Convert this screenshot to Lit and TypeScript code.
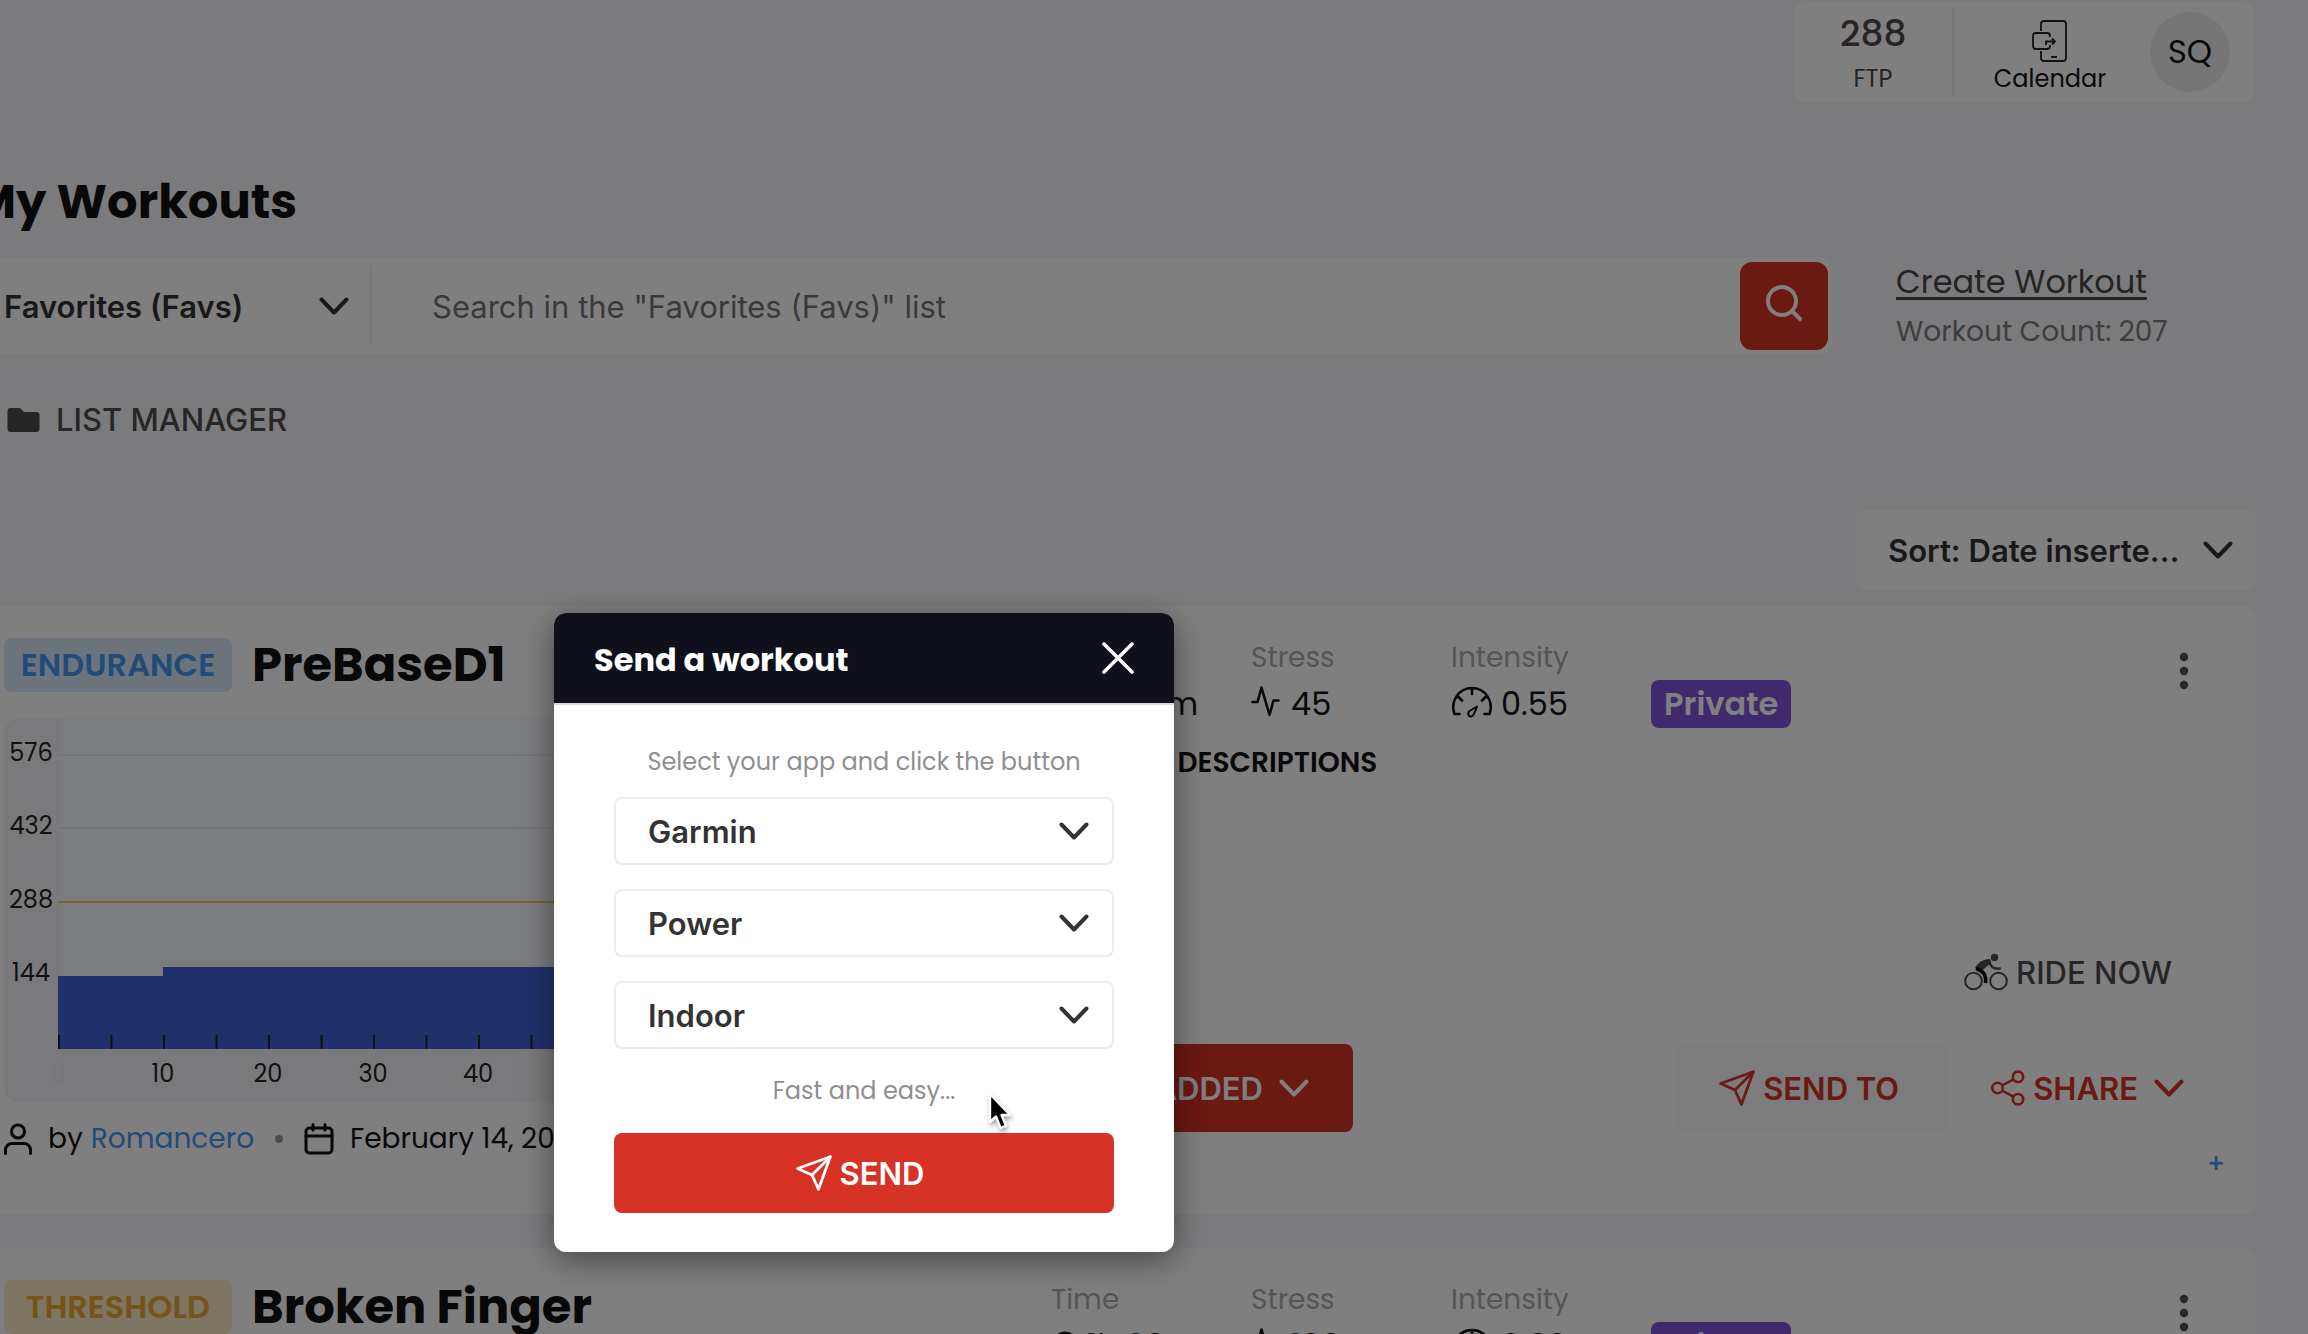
import { LitElement, html, svg, css, nothing } from "lit";
import { customElement, property } from "lit/decorators.js";

interface Workout {
  kind: string;
  tone: "blue" | "amber";
  title: string;
  time: string;
  stress: string;
  intensity: string;
  author: string;
  date: string;
}

const WORKOUTS: Workout[] = [
  { kind: "ENDURANCE", tone: "blue", title: "PreBaseD1", time: "1h 30m", stress: "45", intensity: "0.55", author: "Romancero", date: "February 14, 2023" },
  { kind: "THRESHOLD", tone: "amber", title: "Broken Finger", time: "1h 30", stress: "100", intensity: "0.82", author: "Romancero", date: "February 14, 2023" },
];

const chevron = html`<svg class="chev" viewBox="0 0 30 18" aria-hidden="true"><path d="M2.5 2.5 15 15.500 27.500 2.500" fill="none" stroke="currentColor" stroke-width="4" stroke-linecap="round" stroke-linejoin="round"/></svg>`;

const plane = html`<svg class="ico36" viewBox="0 0 36 36" aria-hidden="true"><g fill="none" stroke="currentColor" stroke-width="2.800" stroke-linejoin="round" stroke-linecap="round"><path d="M34.300 1.700 22.500 34.300 16 20 1.700 13.500Z"/><path d="M34.300 1.700 16 20"/></g></svg>`;

const base = css`
  * { box-sizing: border-box; }
  button, select, input { font: inherit; color: inherit; border: 0; background: none; margin: 0; padding: 0; }
  button { cursor: pointer; display: inline-flex; align-items: center; justify-content: center; white-space: nowrap; }
  svg { display: block; flex: none; }
  .chev { width: 30px; height: 18px; }
  .ico36 { width: 36px; height: 36px; }
`;

@customElement("workout-chart")
class WorkoutChart extends LitElement {
  static styles = css`
    :host { display: block; }
    .plot { display: block; width: 100%; height: auto; border-radius: 16px; }
    .label { font: 400 24px Poppins, Inter, sans-serif; fill: #222; text-anchor: middle; }
    .faint { fill: #ececf0; }
  `;

  render() {
    const levels = [576, 432, 288, 144];
    const ticks = Array.from({ length: 19 }, (_, i) => i);
    const step = (i: number) => Math.round(i * 73.4);
    return html`<svg class="plot" viewBox="0 0 1007 385" role="img" aria-label="Power profile">
      <rect width="1007" height="385" fill="#f4f4f8" />
      <rect x="54" width="953" height="331" fill="#f6f8fc" />
      ${levels.map((v, i) => svg`
        <text class="label" x="27" y=${43 + step(i)}>${v}</text>
        ${i < 3 ? svg`<rect x="54" y=${36 + step(i)} width="953" height="2" fill=${v === 288 ? "#f5c868" : "#e6e8ec"} />` : nothing}`)}
      <path d="M54 258H159V249H1007V331H54Z" fill="#3c62d4" />
      ${ticks.map((i) => svg`<rect x=${54 + i * 52.5} y="317" width="2" height="14" fill="#222" />`)}
      ${ticks.filter((i) => i % 2 === 0).map((i) => svg`<text class=${i ? "label" : "label faint"} x=${54 + i * 52.5} y="364">${i * 5}</text>`)}
    </svg>`;
  }
}

@customElement("workout-card")
class WorkoutCard extends LitElement {
  @property({ attribute: false }) workout!: Workout;

  static styles = [base, css`
    :host { display: block; background: #fff; border-radius: 12px; min-height: 608px; padding: 32px; color: #111; }
    .cols { display: grid; grid-template-columns: minmax(0, 1007fr) minmax(0, 1173fr); gap: 40px; }
    .head { display: flex; align-items: center; gap: 20px; height: 54px; margin-bottom: 26px; }
    .kind { width: 228px; line-height: 54px; text-align: center; border-radius: 8px; font-size: 32px; font-weight: 600; }
    .blue { background: #d7e9fb; color: #4496f0; }
    .amber { background: #fceac5; color: #e8a836; }
    .title { margin: 0; font-size: 48px; line-height: 54px; font-weight: 700; white-space: nowrap; }
    .meta { display: flex; align-items: center; margin-top: 16px; font-size: 28px; line-height: 40px; white-space: nowrap; }
    .user { width: 28px; height: 32px; margin-right: 16px; }
    .author { color: #4496f0; text-decoration: none; margin-left: 8px; }
    .dot { width: 8px; height: 8px; border-radius: 50%; background: #9a9ca0; margin: 0 21px; }
    .cal { width: 30px; height: 32px; margin-right: 16px; }
    .side { display: flex; flex-direction: column; align-items: flex-start; }
    .stats { align-self: stretch; display: grid; grid-template-columns: 200px 200px 200px auto 1fr; }
    .stat { margin: 0; }
    .name { font-size: 28px; line-height: 40px; color: #aaabad; margin-bottom: 2px; }
    .value { display: flex; align-items: center; gap: 8px; margin: 0; font-size: 32px; line-height: 48px; }
    .private { align-self: end; background: #8055dd; color: #fff; border-radius: 8px; font-size: 32px; font-weight: 600; line-height: 48px; padding: 0 13px; }
    .more { justify-self: end; width: 80px; height: 66px; }
    .desc { margin-top: 15px; font-size: 28px; line-height: 40px; font-weight: 600; gap: 8px; }
    .ride, .act { font-family: Inter, sans-serif; font-size: 31px; font-weight: 600; gap: 8px; }
    .ride { align-self: flex-end; margin-top: 165px; height: 48px; padding: 0 52px; font-weight: 500; color: #4c4c4c; }
    .acts { align-self: stretch; display: flex; margin-top: 48px; }
    .act { height: 88px; padding: 0 40px; border-radius: 8px; color: #d63326; }
    .added { width: 302px; justify-content: flex-end; background: #d63326; color: #fff; gap: 16px; padding: 0 44px; }
    .send { margin: 0 4px 0 auto; background: #f9f9f9; padding: 0 48px 0 42px; }
    .share { gap: 16px; }
    .pair { display: flex; align-items: center; gap: 8px; }
    .plus { align-self: flex-end; margin-top: 16px; width: 16px; height: 32px; font-size: 26px; line-height: 32px; font-weight: 500; color: #4496f0; }
    .stroke { fill: none; stroke: currentColor; stroke-width: 3; stroke-linecap: round; stroke-linejoin: round; }
  `];

  render() {
    const w = this.workout;
    return html`<article class="cols">
      <div class="main">
        <div class="head"><span class="kind ${w.tone}">${w.kind}</span><h2 class="title">${w.title}</h2></div>
        <workout-chart></workout-chart>
        <div class="meta">
          <svg class="user stroke" viewBox="0 0 28 32"><circle cx="14" cy="8.500" r="6.500"/><path d="M1.500 30.500V27a6.500 6.500 0 0 1 6.500-6.500H20a6.500 6.500 0 0 1 6.500 6.500v3.500"/></svg>
          <span>by</span><a class="author" href="#author">${w.author}</a>
          <span class="dot"></span>
          <svg class="cal stroke" viewBox="0 0 30 32"><rect x="2" y="5" width="26" height="25" rx="3.500"/><path d="M2 13H28M9 1.500V7M21 1.500V7"/></svg>
          <span>${w.date}</span>
        </div>
      </div>
      <div class="side">
        <div class="stats">
          <div class="stat"><div class="name">Time</div><div class="value">
            <svg width="28" height="36" viewBox="0 0 28 36" class="stroke"><circle cx="14" cy="17" r="12"/><path d="M14 10v7l5 3"/></svg>${w.time}</div></div>
          <div class="stat"><div class="name">Stress</div><div class="value">
            <svg width="32" height="36" viewBox="0 0 32 36" class="stroke"><path d="M1.500 16H6.500L10.500 1.500 18.500 29 22.500 14.500h5" stroke-width="2.600"/></svg>${w.stress}</div></div>
          <div class="stat"><div class="name">Intensity</div><div class="value">
            <svg width="42" height="36" viewBox="0 0 42 36" class="stroke"><path d="M8.500 28H3.500C-1 15 8 2 21 2S43 15 38.500 28H33.500M21 2.500V8M7.500 11l3.500 3.500M34.500 11 31 14.500" stroke-width="2.600"/><path d="M26 20.500 18.500 25c-2.500 2-1 6 1.800 5.500 2.500-.5 3-3.500 5.700-10Z" stroke-width="2"/></svg>${w.intensity}</div></div>
          <span class="private">Private</span>
          <button class="more" aria-label="More options"><svg width="10" height="38" viewBox="0 0 10 38" fill="#4c4c4c"><circle cx="5" cy="5" r="4.200"/><circle cx="5" cy="19" r="4.200"/><circle cx="5" cy="33" r="4.200"/></svg></button>
        </div>
        <button class="desc"><svg width="24" height="24" viewBox="0 0 24 24" class="stroke"><path d="M4 9l8 8 8-8"/></svg>SHOW DESCRIPTIONS</button>
        <button class="ride"><svg width="44" height="38" viewBox="0 0 44 38"><g fill="none" stroke="#4c4c4c" stroke-width="2"><circle cx="9.500" cy="28" r="8.300"/><circle cx="34.500" cy="28" r="8.300"/></g><circle cx="30.500" cy="4.500" r="3.700" fill="#4c4c4c"/><path d="M25.500 8 C26 13 29 16.500 36 15.500" fill="none" stroke="#4c4c4c" stroke-width="2.400" stroke-linecap="round"/><path d="M11 15C14 9.500 19 6 26 6L27 10 17.500 18Z" fill="#4c4c4c"/><path d="M12 15.500C19 18 22.500 21 21.500 30" fill="none" stroke="#000" stroke-width="3.600"/></svg>RIDE NOW</button>
        <div class="acts">
          <button class="act added">ADDED ${chevron}</button>
          <button class="act send">${plane}SEND TO</button>
          <button class="act share"><span class="pair"><svg width="34" height="36" viewBox="0 0 34 36" fill="none" stroke="currentColor" stroke-width="2.600"><circle cx="6.500" cy="18" r="5.200"/><circle cx="27" cy="6.800" r="5.200"/><circle cx="27" cy="29.200" r="5.200"/><path d="M11 15.300 22.500 9.300M11 20.700 22.500 26.700"/></svg>SHARE</span>${chevron}</button>
        </div>
        <button class="plus" aria-label="Expand">+</button>
      </div>
    </article>`;
  }
}

@customElement("send-dialog")
class SendDialog extends LitElement {
  static styles = [base, css`
    :host { display: block; background: #fff; border-radius: 12px; overflow: hidden; box-shadow: 0 8px 32px rgba(0, 0, 0, 0.45); }
    .bar { display: flex; align-items: center; justify-content: space-between; height: 92px; padding: 0 40px; background: #10101c; color: #fff; border-bottom: 2px solid #d9d6de; }
    .name { margin: 0; padding-top: 3px; font-size: 32px; line-height: 48px; font-weight: 700; }
    .body { display: flex; flex-direction: column; padding: 37px 60px 39px; }
    .hint { margin: 0; text-align: center; font-size: 24px; line-height: 40px; color: #8f8f8f; }
    .field { position: relative; display: block; color: #333; }
    .hint + .field { margin-top: 15px; }
    .field + .field { margin-top: 24px; }
    .field + .hint { margin-top: 22px; }
    .pick { display: block; appearance: none; width: 100%; height: 68px; border: 2px solid #ededed; border-radius: 8px; padding: 0 64px 0 32px; font-family: Inter, sans-serif; font-size: 31px; font-weight: 600; background: #fff; }
    .field .chev { position: absolute; right: 25px; top: 25px; pointer-events: none; }
    .submit { margin-top: 22px; height: 80px; padding-right: 8px; border-radius: 8px; background: #d63326; color: #fff; font-family: Inter, sans-serif; font-size: 31px; font-weight: 600; gap: 8px; }
  `];

  private field(label: string, options: string[]) {
    return html`<label class="field"><select class="pick" aria-label=${label}>${options.map((o) => html`<option>${o}</option>`)}</select>${chevron}</label>`;
  }

  render() {
    return html`
      <header class="bar"><h2 class="name">Send a workout</h2>
        <button aria-label="Close"><svg width="32" height="32" viewBox="0 0 32 32"><path d="M2 2 30 30M30 2 2 30" stroke="#fff" stroke-width="3.600" stroke-linecap="round"/></svg></button></header>
      <div class="body">
        <p class="hint">Select your app and click the button</p>
        ${this.field("App", ["Garmin", "Wahoo"])}
        ${this.field("Target", ["Power", "Heart rate"])}
        ${this.field("Place", ["Indoor", "Outdoor"])}
        <p class="hint">Fast and easy...</p>
        <button class="submit">${plane}SEND</button>
      </div>`;
  }
}

@customElement("app-root")
class AppRoot extends LitElement {
  static styles = [base, css`
    :host { display: block; position: relative; height: 100vh; overflow: hidden; background: #f6f6fa; font-family: Poppins, Inter, sans-serif; color: #111; }
    .page { display: flex; flex-direction: column; margin-left: -28px; padding: 2px 52px 0 0; }
    .top { align-self: flex-end; display: flex; align-items: center; height: 100px; margin-right: 2px; border-radius: 12px; background: #fff; padding-right: 24px; }
    .ftp, .calendar { display: flex; flex-direction: column; align-items: center; height: 90px; font-size: 24px; }
    .ftp { width: 160px; padding-top: 3px; line-height: 42px; color: #504848; border-right: 2px solid #f0f0f0; }
    .num { font-size: 36px; line-height: 48px; font-weight: 500; }
    .calendar { width: 196px; padding: 13px 4px 0 0; line-height: 34px; color: #111; text-decoration: none; }
    .avatar { width: 80px; height: 80px; border-radius: 50%; background: #ececec; font-size: 32px; }
    .heading { margin: 72px 0 28px; font-size: 48px; line-height: 56px; font-weight: 700; }
    .row { display: flex; gap: 64px; }
    .search { flex: 1; display: flex; align-items: center; height: 96px; border-radius: 12px; background: #fff; padding-right: 4px; font-size: 31px; }
    .list { position: relative; width: 400px; border-right: 2px solid #f0f0f0; color: #333; }
    .pick { display: block; appearance: none; width: 100%; height: 80px; padding-left: 32px; font-family: Inter, sans-serif; font-size: 31px; font-weight: 600; }
    .list .chev { position: absolute; right: 21px; top: 31px; pointer-events: none; }
    .query { flex: 1; height: 80px; padding: 0 60px; outline: 0; font-family: Inter, sans-serif; }
    .query::placeholder { color: #757575; opacity: 1; }
    .go { width: 88px; height: 88px; padding-bottom: 6px; border-radius: 12px; background: #d63326; color: #fff; }
    .links { width: 360px; height: 96px; line-height: 48px; display: flex; flex-direction: column; align-items: flex-start; gap: 2px; }
    .create { font-size: 32px; color: #4a4646; text-underline-offset: 4px; }
    .count { font-size: 28px; color: #7d7d7d; }
    .manager { align-self: flex-start; gap: 16px; margin: 46px 0 70px 35px; font-family: Inter, sans-serif; font-size: 31px; line-height: 40px; font-weight: 500; color: #4c4c4c; }
    .sort { align-self: flex-end; position: relative; width: 400px; background: #fff; border-radius: 8px; color: #333; margin-bottom: 16px; }
    .sort .pick { padding: 0 72px 0 32px; text-overflow: ellipsis; }
    .sort .chev { position: absolute; right: 23px; top: 31px; pointer-events: none; }
    .cards { display: flex; flex-direction: column; gap: 34px; }
    .shade { position: absolute; inset: 0; background: rgba(0, 0, 0, 0.5); }
    .dialog { position: absolute; left: 554px; top: 613px; width: 620px; }
    .cursor { position: absolute; left: 986px; top: 1090px; filter: drop-shadow(1px 3px 2px rgba(0, 0, 0, 0.35)); }
  `];

  render() {
    return html`
      <div class="page">
        <header class="top">
          <div class="ftp"><span class="num">288</span><span>FTP</span></div>
          <a class="calendar" href="#calendar"><svg width="36" height="42" viewBox="0 0 36 42" fill="none" stroke="#222" stroke-width="1.800"><path d="M9 11V4a3 3 0 0 1 3-3H31a3 3 0 0 1 3 3V38a3 3 0 0 1-3 3H12a3 3 0 0 1-3-3V31M19 37h6"/><path d="M18 17V16a3 3 0 0 0-3-3H4a3 3 0 0 0-3 3V26a3 3 0 0 0 3 3H15a3 3 0 0 0 3-3V25M14 25V21.500H23M20 18.500l3 3-3 3"/></svg>Calendar</a>
          <button class="avatar">SQ</button>
        </header>
        <h1 class="heading">My Workouts</h1>
        <div class="row">
          <div class="search">
            <label class="list"><select class="pick" aria-label="List"><option>Favorites (Favs)</option></select>${chevron}</label>
            <input class="query" type="text" aria-label="Search" placeholder='Search in the "Favorites (Favs)" list' />
            <button class="go" aria-label="Search"><svg width="38" height="38" viewBox="0 0 38 38" fill="none" stroke="currentColor" stroke-width="4" stroke-linecap="round"><circle cx="17" cy="17" r="14"/><path d="M27 27l8 8"/></svg></button>
          </div>
          <div class="links"><a class="create" href="#create">Create Workout</a><span class="count">Workout Count: 207</span></div>
        </div>
        <button class="manager"><svg width="33" height="26" viewBox="0 0 33 26"><path d="M3.500 1H13l4 4H29.500A3 3 0 0 1 32.500 8V22a3 3 0 0 1-3 3H3.500a3 3 0 0 1-3-3V4a3 3 0 0 1 3-3Z" fill="#4c4c4c"/></svg>LIST MANAGER</button>
        <label class="sort"><select class="pick" aria-label="Sort"><option>Sort: Date inserted (newest)</option></select>${chevron}</label>
        <div class="cards">${WORKOUTS.map((w) => html`<workout-card .workout=${w}></workout-card>`)}</div>
      </div>
      <div class="shade"></div>
      <send-dialog class="dialog" role="dialog" aria-label="Send a workout"></send-dialog>
      <svg class="cursor" width="26" height="42" viewBox="0 0 26 42"><path d="M4 4V32l6-5.500L14.500 38l5.500-2.300L15.500 25H24Z" fill="#000" stroke="#fff" stroke-width="2.400" stroke-linejoin="round"/></svg>`;
  }
}
